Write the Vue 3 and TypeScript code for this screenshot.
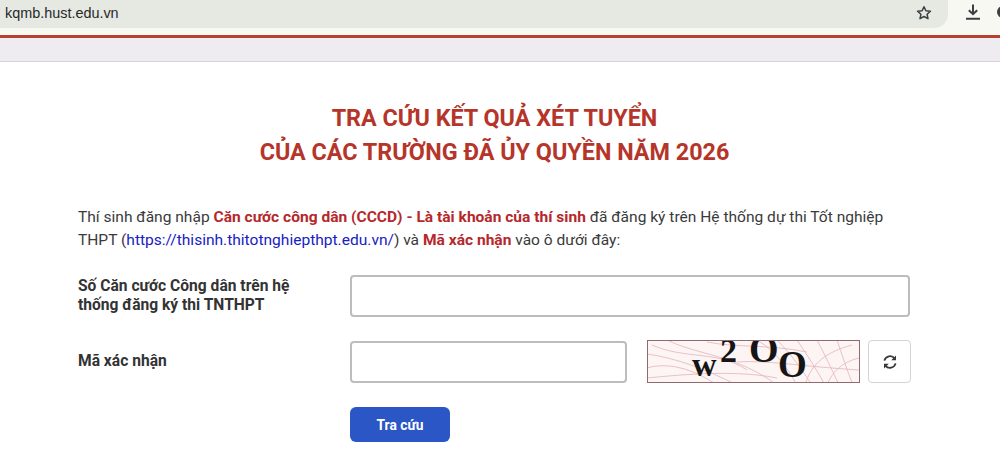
<script setup lang="ts">
const lines: string[] = [
  'M5 5 C40 20 70 10 100 30', 'M0 14 C30 18 60 30 90 45', 'M20 0 C50 15 90 15 130 45', 'M0 28 C20 22 45 28 70 45',
  'M110 0 C130 12 140 28 150 45', 'M130 0 C145 15 155 30 165 45', 'M150 0 C160 15 170 30 178 45', 'M170 0 C178 15 185 30 192 45',
  'M190 0 C195 15 200 30 206 45', 'M60 2 C90 8 120 4 160 12', 'M205 5 C180 12 165 22 158 45', 'M212 18 C195 22 185 32 180 45',
  'M0 38 C40 34 90 30 130 38', 'M90 22 C120 20 150 26 212 30',
]
</script>

<template>
  <div class="page">
    <header class="browser">
      <div class="address">
        <span class="url">kqmb.hust.edu.vn</span>
        <svg class="star" viewBox="0 0 16 16" width="16" height="16" aria-hidden="true">
          <path d="M8 1.7l1.9 4.1 4.5.5-3.3 3 .9 4.4L8 11.5l-4 2.2.9-4.4-3.3-3 4.5-.5z" fill="none" stroke="#3c3f41" stroke-width="1.5" stroke-linejoin="round" />
        </svg>
      </div>
      <div class="tools">
        <svg viewBox="0 0 18 18" width="18" height="18" aria-hidden="true">
          <path d="M9 1.5v9.5M4.8 7.2L9 11.2l4.2-4M2 15.8h14" fill="none" stroke="#3c3f41" stroke-width="2" />
        </svg>
        <span class="avatar"></span>
      </div>
    </header>
    <div class="band"></div>

    <main class="content">
      <h1 class="title">TRA CỨU KẾT QUẢ XÉT TUYỂN<br />CỦA CÁC TRƯỜNG ĐÃ ỦY QUYỀN NĂM 2026</h1>

      <p class="intro">
        Thí sinh đăng nhập <b class="red">Căn cước công dân (CCCD) - Là tài khoản của thí sinh</b> đã đăng ký trên Hệ thống dự thi Tốt nghiệp
        THPT (<a class="link">https://thisinh.thitotnghiepthpt.edu.vn/</a>) và <b class="red">Mã xác nhận</b> vào ô dưới đây:
      </p>

      <div class="row first">
        <label class="label">Số Căn cước Công dân trên hệ thống đăng ký thi TNTHPT</label>
        <input class="field wide" type="text" />
      </div>

      <div class="row second">
        <label class="label">Mã xác nhận</label>
        <input class="field code" type="text" />
        <svg class="captcha" viewBox="0 0 213 43" width="213" height="43" role="img" aria-label="captcha">
          <rect x="0.5" y="0.5" width="212" height="42" fill="#fdf4f4" />
          <path v-for="d in lines" :key="d" :d="d" fill="none" stroke="#e2b5ba" stroke-width="0.8" />
          <g font-family="'Liberation Serif', serif" font-weight="700" fill="#151515">
            <text x="45" y="36" font-size="34">w</text>
            <text x="73" y="22" font-size="34">2</text>
            <text x="102" y="22" font-size="38">O</text>
            <text x="131" y="37" font-size="37">O</text>
          </g>
          <rect x="0.5" y="0.5" width="212" height="42" fill="none" stroke="#8d6b70" />
        </svg>
        <button class="refresh" type="button" aria-label="refresh">
          <svg viewBox="0 0 16 16" width="16" height="16" aria-hidden="true">
            <path d="M2.4 6.6A5.8 5.8 0 0 1 12.6 4.4M13.6 9.4A5.8 5.8 0 0 1 3.4 11.6" fill="none" stroke="#3a3a3a" stroke-width="1.8" />
            <path d="M14 1.4v4.8H9.2zM2 14.6V9.8h4.8z" fill="#3a3a3a" />
          </svg>
        </button>
      </div>

      <div class="actions">
        <button class="submit" type="button">Tra cứu</button>
      </div>
    </main>
  </div>
</template>

<style>
html, body { margin: 0; background: #fff; }
</style>

<style scoped>
.page {
  width: 1000px;
  height: 472px;
  overflow: hidden;
  background: #fff;
  font-family: Roboto, "Liberation Sans", sans-serif;
  color: #333;
}
.browser {
  height: 35px;
  display: flex;
  align-items: flex-start;
  background: #f6f8f1;
  border-bottom: 3px solid #b8402f;
}
.address {
  flex: none;
  width: 948px;
  height: 28px;
  display: flex;
  align-items: center;
  justify-content: space-between;
  box-sizing: border-box;
  padding: 0 16px 3px 5px;
  background: #e6e8e2;
  border-bottom-right-radius: 14px;
}
.url {
  font-family: "Liberation Sans", sans-serif;
  font-size: 14.4px;
  color: #26282a;
}
.star { display: block; }
.tools {
  flex: none;
  display: flex;
  align-items: center;
  gap: 15px;
  padding: 3px 0 0 16px;
}
.avatar {
  flex: none;
  width: 12px;
  height: 12px;
  border-radius: 50%;
  background: #3c3f41;
}
.band {
  height: 23px;
  background: #eeecf1;
  border-bottom: 1px solid #d6d3da;
}
.content {
  width: 833px;
  margin-left: 78px;
}
.title {
  margin: 39px 0 0;
  text-align: center;
  font-size: 23.35px;
  line-height: 34px;
  font-weight: 700;
  color: #b5352a;
}
.intro {
  width: 832px;
  margin: 37px 0 0;
  font-size: 15.55px;
  line-height: 23px;
  color: #3a3a3a;
}
.red { color: #b5282b; font-weight: 700; }
.link { color: #1620c4; }
.row {
  display: flex;
  align-items: center;
}
.first { margin-top: 23px; }
.second { margin-top: 23px; }
.label {
  width: 272px;
  box-sizing: border-box;
  padding-right: 30px;
  flex: none;
  font-size: 15.6px;
  line-height: 19px;
  font-weight: 700;
  color: #333;
}
.field {
  flex: none;
  box-sizing: border-box;
  height: 42px;
  background: #fff;
  border: 2px solid #bdbdbd;
  border-radius: 4px;
  outline: none;
}
.wide { width: 560px; }
.code { width: 277px; }
.captcha {
  flex: none;
  display: block;
  margin-left: 20px;
}
.refresh {
  flex: none;
  width: 43px;
  height: 43px;
  margin-left: 8px;
  display: flex;
  align-items: center;
  justify-content: center;
  padding: 0;
  background: #fff;
  border: 1px solid #d4d4d8;
  border-radius: 4px;
}
.actions {
  margin: 24px 0 0 272px;
}
.submit {
  width: 100px;
  height: 35px;
  background: #2a56c6;
  color: #fff;
  border: none;
  border-radius: 6px;
  font-family: inherit;
  font-size: 13.8px;
  font-weight: 700;
}
</style>
